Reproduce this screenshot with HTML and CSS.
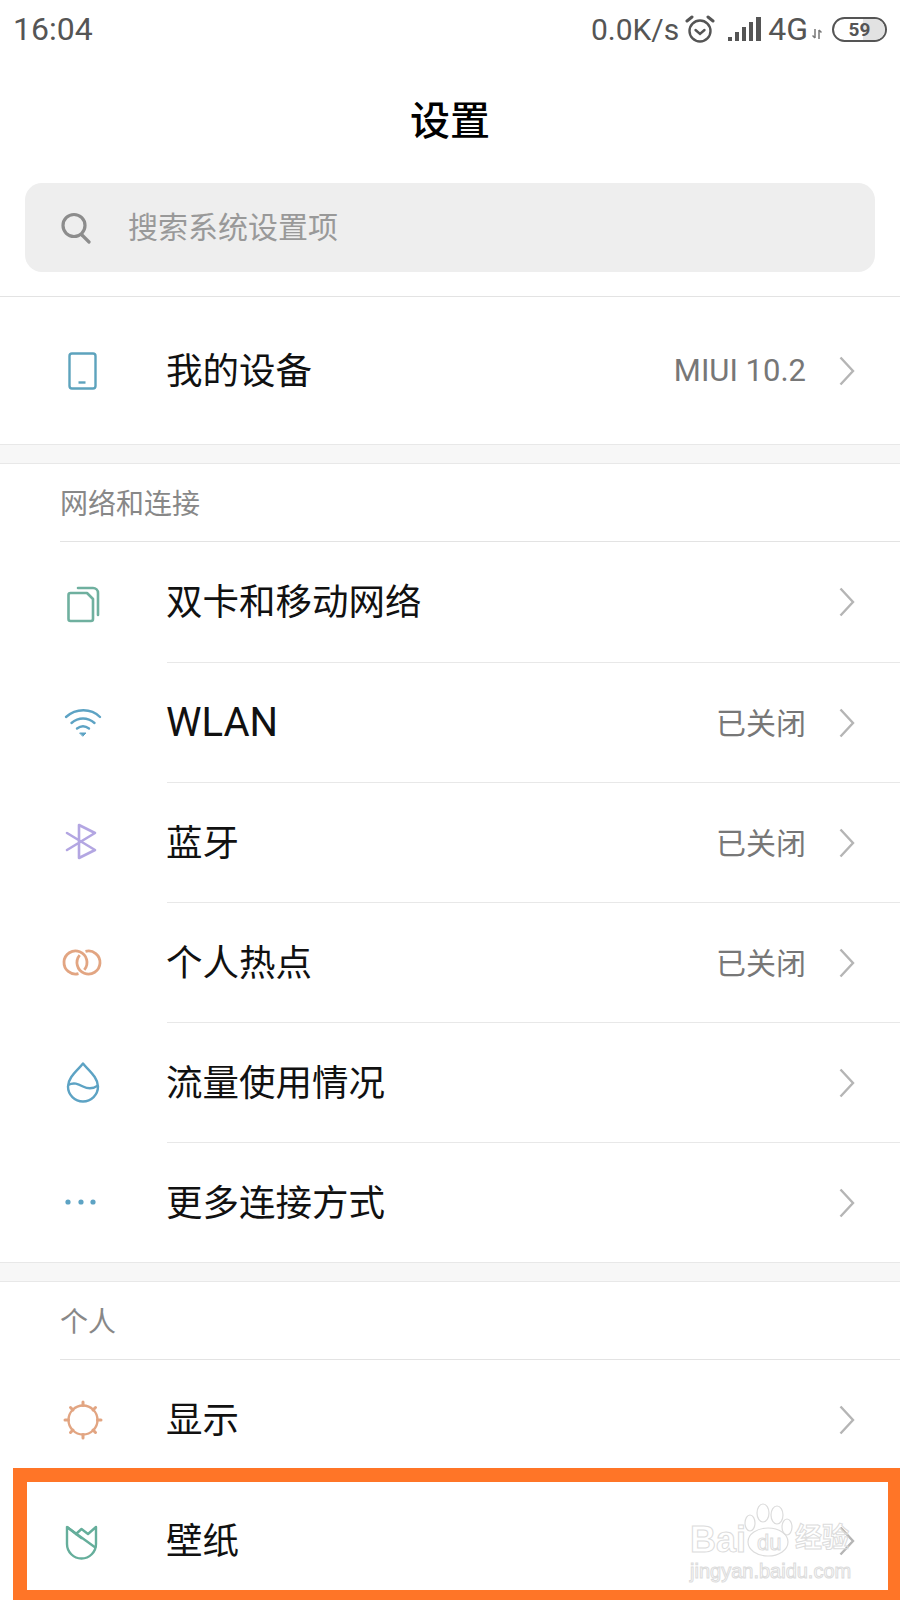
FILE: index.html
```html
<!DOCTYPE html>
<html>
<head>
  <title>设置</title>
  <meta charset="utf-8">
  <link rel="stylesheet" href="styles.css">
</head>
<body>
  <div class="status-bar">
    <span class="time">16:04</span>
    <div class="status-right">
      <span class="speed">0.0K/s</span>
      <svg class="alarm" width="30" height="28" viewBox="0 0 30 28" fill="none" stroke="#555" stroke-width="2.4" stroke-linecap="round">
        <circle cx="15" cy="16" r="10.5"/>
        <path d="M10.5 15l4.500 4 4.500-4"/>
        <path d="M2 6l5-4M28 6l-5-4" stroke-width="3"/>
      </svg>
      <svg class="signal" width="34" height="24" viewBox="0 0 34 24" fill="#555">
        <rect x="0" y="20" width="4" height="4"/>
        <rect x="7" y="15" width="4" height="9"/>
        <rect x="14" y="10" width="4" height="14"/>
        <rect x="21" y="5" width="4" height="19"/>
        <rect x="28" y="0" width="5" height="24"/>
      </svg>
      <span class="net">4G</span>
      <svg class="arrows" width="10" height="10" viewBox="0 0 10 10" fill="none" stroke="#777" stroke-width="1.500">
        <path d="M3 0v9M0.500 6.500L3 9M7 10V1M9.500 3.500L7 1"/>
      </svg>
      <div class="battery">
        <div class="battery-level"></div>
        <span class="battery-num">59</span>
      </div>
    </div>
  </div>

  <h1 class="title">设置</h1>

  <div class="search">
    <svg width="32" height="32" viewBox="0 0 32 32" fill="none" stroke="#8c8c8c" stroke-width="3.200" stroke-linecap="round">
      <circle cx="14" cy="13.500" r="11"/>
      <path d="M22 23l7 7"/>
    </svg>
    <span class="search-text">搜索系统设置项</span>
  </div>

  <div class="group group-first">
    <div class="row">
      <svg class="icon" width="44" height="44" viewBox="0 0 44 44" fill="none" stroke="#5da3bd" stroke-width="2.400">
        <rect x="8.500" y="4.500" width="26" height="35" rx="2.500"/>
        <path d="M17.500 33.500h7"/>
      </svg>
      <div class="row-body row-device">
        <span class="name">我的设备</span>
        <span class="value value-latin">MIUI 10.2</span>
        <svg class="chevron" width="16" height="30" viewBox="0 0 16 30" fill="none" stroke="#b5b5b5" stroke-width="2.400"><path d="M1.500 1.500L14 15 1.500 28.500"/></svg>
      </div>
    </div>
  </div>

  <div class="band"></div>

  <div class="group">
    <div class="section-label">网络和连接</div>
    <div class="row">
      <svg class="icon" width="44" height="44" viewBox="0 0 44 44" fill="none" stroke="#6fb09f" stroke-width="2.600" stroke-linejoin="round" stroke-linecap="round">
        <path d="M9.500 13H26l6 6v20a2 2 0 0 1-2 2H9.500a2 2 0 0 1-2-2V15a2 2 0 0 1 2-2z"/>
        <path d="M17 8h15a5 5 0 0 1 5 5v22"/>
      </svg>
      <div class="row-body">
        <span class="name">双卡和移动网络</span>
        <svg class="chevron" width="16" height="30" viewBox="0 0 16 30" fill="none" stroke="#b5b5b5" stroke-width="2.400"><path d="M1.500 1.500L14 15 1.500 28.500"/></svg>
      </div>
    </div>
    <div class="row">
      <svg class="icon" width="44" height="44" viewBox="0 0 44 44" fill="none" stroke="#5da3c4" stroke-width="2.400" stroke-linecap="round">
        <path d="M5 17c10-9 25-9 34 0"/>
        <path d="M10.500 23c7-6 16-6 23 0"/>
        <path d="M16 28.500c4-3 8-3 12 0"/>
        <path d="M19 33h6l-3 3z" fill="#5da3c4" stroke-width="1"/>
      </svg>
      <div class="row-body">
        <span class="name name-latin">WLAN</span>
        <span class="value">已关闭</span>
        <svg class="chevron" width="16" height="30" viewBox="0 0 16 30" fill="none" stroke="#b5b5b5" stroke-width="2.400"><path d="M1.500 1.500L14 15 1.500 28.500"/></svg>
      </div>
    </div>
    <div class="row">
      <svg class="icon" width="44" height="44" viewBox="0 0 44 44" fill="none" stroke="#b3a6e2" stroke-width="2.600" stroke-linecap="round" stroke-linejoin="round">
        <path d="M6 13l28 17-16 8V5l16 8-28 17"/>
      </svg>
      <div class="row-body">
        <span class="name">蓝牙</span>
        <span class="value">已关闭</span>
        <svg class="chevron" width="16" height="30" viewBox="0 0 16 30" fill="none" stroke="#b5b5b5" stroke-width="2.400"><path d="M1.500 1.500L14 15 1.500 28.500"/></svg>
      </div>
    </div>
    <div class="row">
      <svg class="icon" width="44" height="44" viewBox="0 0 44 44" fill="none" stroke="#e2a582" stroke-width="2.800">
        <path d="M17.500 33.600A11.500 11.500 0 1 1 23.300 29.900"/>
        <path d="M24.500 11.400A11.500 11.500 0 1 1 18.700 15.100"/>
      </svg>
      <div class="row-body">
        <span class="name">个人热点</span>
        <span class="value">已关闭</span>
        <svg class="chevron" width="16" height="30" viewBox="0 0 16 30" fill="none" stroke="#b5b5b5" stroke-width="2.400"><path d="M1.500 1.500L14 15 1.500 28.500"/></svg>
      </div>
    </div>
    <div class="row">
      <svg class="icon" width="44" height="44" viewBox="0 0 44 44" fill="none" stroke="#5da3c4" stroke-width="2.400" stroke-linejoin="round">
        <path d="M22 3.500C17 10 7 17 7 26.500a15 15 0 0 0 30 0C37 17 27 10 22 3.500z"/>
        <path d="M7 25c6-3 10-1 15 1.500s10 2.500 15-1"/>
      </svg>
      <div class="row-body">
        <span class="name">流量使用情况</span>
        <svg class="chevron" width="16" height="30" viewBox="0 0 16 30" fill="none" stroke="#b5b5b5" stroke-width="2.400"><path d="M1.500 1.500L14 15 1.500 28.500"/></svg>
      </div>
    </div>
    <div class="row">
      <svg class="icon" width="44" height="44" viewBox="0 0 44 44" fill="#5da3c4">
        <circle cx="7" cy="22" r="2.600"/>
        <circle cx="20" cy="22" r="2.600"/>
        <circle cx="32" cy="22" r="2.600"/>
      </svg>
      <div class="row-body">
        <span class="name">更多连接方式</span>
        <svg class="chevron" width="16" height="30" viewBox="0 0 16 30" fill="none" stroke="#b5b5b5" stroke-width="2.400"><path d="M1.500 1.500L14 15 1.500 28.500"/></svg>
      </div>
    </div>
  </div>

  <div class="band"></div>

  <div class="group">
    <div class="section-label">个人</div>
    <div class="row">
      <svg class="icon" width="44" height="44" viewBox="0 0 44 44" fill="none" stroke="#e2a582" stroke-width="2.400" stroke-linecap="round">
        <circle cx="22" cy="22" r="14.500"/>
        <path d="M22 4v3.500M22 36.500V40M4 22h3.500M36.500 22H40M9.500 9.500l2.500 2.500M32 32l2.500 2.500M34.500 9.500L32 12M12 32l-2.500 2.500" stroke-width="3"/>
      </svg>
      <div class="row-body">
        <span class="name">显示</span>
        <svg class="chevron" width="16" height="30" viewBox="0 0 16 30" fill="none" stroke="#b5b5b5" stroke-width="2.400"><path d="M1.500 1.500L14 15 1.500 28.500"/></svg>
      </div>
    </div>
    <div class="row">
      <svg class="icon" width="44" height="44" viewBox="0 0 44 44" fill="none" stroke="#65ae9b" stroke-width="2.400" stroke-linejoin="round">
        <path d="M6 9v17a14.500 14.500 0 0 0 29 0V9l-8 7-6.500-5-5.500 5z"/>
        <path d="M6 9l29 21M15 16l6 4.500"/>
      </svg>
      <div class="row-body">
        <span class="name">壁纸</span>
        <svg class="chevron" width="16" height="30" viewBox="0 0 16 30" fill="none" stroke="#b5b5b5" stroke-width="2.400"><path d="M1.500 1.500L14 15 1.500 28.500"/></svg>
      </div>
    </div>
  </div>

  <!-- highlight frame and watermark sit on top of the screenshot -->
  <div class="highlight"></div>
  <div class="watermark">
    <svg class="paw" width="52" height="58" viewBox="0 0 52 58" fill="none" stroke="#dcdcdc" stroke-width="1.200">
      <ellipse cx="7" cy="20" rx="5" ry="8"/>
      <ellipse cx="20" cy="10" rx="6" ry="9"/>
      <ellipse cx="34" cy="12" rx="6" ry="9"/>
      <ellipse cx="44" cy="24" rx="5" ry="8"/>
      <ellipse cx="25" cy="39" rx="20" ry="14"/>
    </svg>
    <span class="wm-logo">Bai</span>
    <span class="wm-du">du</span>
    <span class="wm-cn">经验</span>
    <span class="wm-url">jingyan.baidu.com</span>
  </div>
</body>
</html>
```

FILE: styles.css
```css
html, body {
  margin: 0;
  padding: 0;
}
body {
  position: relative;
  width: 900px;
  height: 1600px;
  overflow: hidden;
  background-color: #fff;
  font-family: "Noto Sans CJK SC", Roboto, sans-serif;
  color: #111;
}

.status-bar {
  display: flex;
  justify-content: space-between;
  align-items: center;
  height: 58px;
  padding: 0 13px;
  font-family: Roboto, sans-serif;
  color: #555;
}
.time {
  font-size: 32px;
}
.status-right {
  display: flex;
  align-items: center;
}
.speed {
  font-size: 30px;
}
.alarm {
  margin-left: 6px;
}
.signal {
  margin-left: 13px;
}
.net {
  margin-left: 6px;
  font-size: 32px;
}
.arrows {
  margin: 10px 0 0 4px;
}
.battery {
  position: relative;
  box-sizing: border-box;
  display: flex;
  justify-content: center;
  align-items: center;
  width: 55px;
  height: 25px;
  margin-left: 10px;
  border: 2.500px solid #555;
  border-radius: 13px;
  overflow: hidden;
}
.battery-level {
  position: absolute;
  top: 0;
  right: 0;
  bottom: 0;
  width: 22px;
  background-color: #e2e2e2;
}
.battery-num {
  position: relative;
  font-size: 19px;
  font-weight: bold;
}

.title {
  height: 125px;
  margin: 0;
  font-size: 40px;
  font-weight: 500;
  line-height: 121px;
  text-align: center;
  color: #000;
}

.search {
  display: flex;
  align-items: center;
  height: 89px;
  margin: 0 25px 24px;
  padding-left: 35px;
  border-radius: 17px;
  background-color: #eee;
}
.search-text {
  margin: 0 0 6px 36px;
  font-size: 30px;
  color: #999;
}

.group-first {
  border-top: 1px solid #e3e3e3;
}
.group-first .row {
  height: 147px;
}
.group-first .row-body {
  border-top: none;
}

.band {
  height: 18px;
  border-top: 1px solid #e8e8e8;
  border-bottom: 1px solid #e8e8e8;
  background-color: #f7f7f7;
}

.section-label {
  height: 77px;
  margin-left: 60px;
  border-bottom: 1px solid #e3e3e3;
  font-size: 28px;
  line-height: 77px;
  color: #888;
}

.row {
  display: flex;
  align-items: center;
  height: 120px;
}
.row .icon {
  flex-shrink: 0;
  margin-left: 61px;
}
.row-body {
  display: flex;
  flex: 1;
  align-items: center;
  align-self: stretch;
  margin-left: 62px;
  padding-right: 45px;
  border-top: 1px solid #e8e8e8;
}
.section-label + .row .row-body {
  border-top: none;
}
.name {
  flex: 1;
  margin: 0 0 5px -1px;
  font-size: 36.500px;
}
.name-latin {
  margin: 0 0 0 -1px;
  font-family: Roboto, sans-serif;
  font-size: 40px;
}
.value {
  margin: 0 33px 4px 0;
  font-size: 30px;
  color: #777;
}
.value-latin {
  margin-bottom: 0;
  font-family: Roboto, sans-serif;
  font-size: 31px;
}

.highlight {
  position: absolute;
  left: 13px;
  top: 1468px;
  right: 0;
  height: 132px;
  box-sizing: border-box;
  border: 14px solid #ff7527;
  border-bottom-width: 10px;
  border-right-width: 12px;
}

.watermark {
  position: absolute;
  left: 690px;
  top: 1502px;
  width: 170px;
  height: 84px;
  color: transparent;
  -webkit-text-stroke: 1px #dcdcdc;
}
.paw {
  position: absolute;
  left: 53px;
  top: 1px;
}
.wm-logo {
  position: absolute;
  left: 0;
  top: 17px;
  font-family: "Liberation Sans", sans-serif;
  font-size: 36px;
  font-weight: bold;
}
.wm-du {
  position: absolute;
  left: 67px;
  top: 28px;
  font-family: "Liberation Sans", sans-serif;
  font-size: 22px;
}
.wm-cn {
  position: absolute;
  left: 105px;
  top: 14px;
  font-size: 27px;
  font-weight: bold;
}
.wm-url {
  position: absolute;
  left: 0;
  top: 58px;
  font-family: "Liberation Sans", sans-serif;
  font-size: 20px;
}
```
